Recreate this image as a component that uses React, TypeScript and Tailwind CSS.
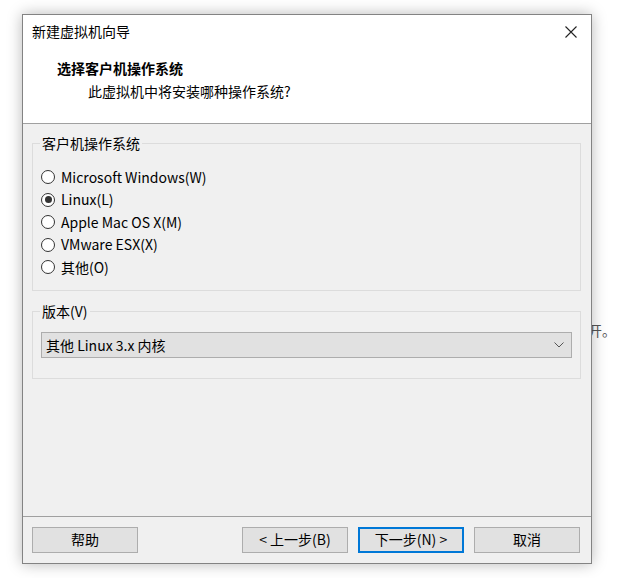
import React from "react";

const font = { fontFamily: '"Noto Sans CJK SC", "Noto Sans", sans-serif' };

const options = ["Microsoft Windows(W)", "Linux(L)", "Apple Mac OS X(M)", "VMware ESX(X)", "其他(O)"];

const Radio = ({ checked }: { checked?: boolean }) => (
  <span className="w-[14px] h-[14px] rounded-full border border-[#333] bg-white flex items-center justify-center shrink-0">
    {checked && <span className="w-[7px] h-[7px] rounded-full bg-[#333]" />}
  </span>
);

const Button = ({ label, primary }: { label: string; primary?: boolean }) => (
  <button
    className={
      "w-[106px] h-[26px] bg-[#e1e1e1] text-[14px] text-black flex items-center justify-center " +
      (primary ? "border-2 border-[#0078d7]" : "border border-[#adadad]")
    }
  >
    {label}
  </button>
);

export default function App() {
  return (
    <div className="relative w-[618px] h-[578px] bg-white overflow-hidden" style={font}>
      <div className="absolute left-[588px] top-[320px] text-[14px] text-[#555]">开。</div>

      <div className="relative ml-[22px] pt-[14px]">
        <div className="w-[570px] h-[550px] border border-[#838383] bg-white flex flex-col shadow-[0_0_14px_rgba(0,0,0,0.28)]">
          {/* title bar */}
          <div className="h-[36px] flex items-center justify-between pl-[9px] pr-[14px] pb-[3px] shrink-0">
            <span className="text-[14px] text-black">新建虚拟机向导</span>
            <svg width="12" height="12" viewBox="0 0 12 12">
              <path d="M0.5 0.5 L11.5 11.5 M11.5 0.5 L0.5 11.5" stroke="#222" strokeWidth="1.1" />
            </svg>
          </div>

          {/* header */}
          <div className="h-[73px] shrink-0 border-b border-[#a0a0a0] pl-[34px] pt-[7px]">
            <div className="text-[14px] font-bold text-black leading-[20px]">选择客户机操作系统</div>
            <div className="text-[14px] text-black leading-[20px] pl-[31px] pt-[3px]">此虚拟机中将安装哪种操作系统?</div>
          </div>

          {/* body */}
          <div className="flex-1 bg-[#f0f0f0] pl-[9px] pr-[10px] pt-[19px] border-b border-[#a0a0a0]">
            <div className="relative h-[148px] border border-[#dcdcdc] pl-[8px] pt-[22px]">
              <span className="absolute left-[7px] -top-[11px] bg-[#f0f0f0] px-[2px] text-[14px] text-black leading-[20px]">
                客户机操作系统
              </span>
              {options.map((o, i) => (
                <div key={o} className="h-[22.5px] flex items-center gap-[6px] text-[14px] text-black">
                  <Radio checked={i === 1} />
                  <span>{o}</span>
                </div>
              ))}
            </div>

            <div className="relative mt-[20px] h-[68px] border border-[#dcdcdc] pl-[8px] pr-[8px] pt-[20px]">
              <span className="absolute left-[7px] -top-[11px] bg-[#f0f0f0] px-[2px] text-[14px] text-black leading-[20px]">
                版本(V)
              </span>
              <div className="h-[26px] border border-[#adadad] bg-[#e1e1e1] flex items-center justify-between pl-[4px] pr-[7px] text-[14px] text-black">
                <span>其他 Linux 3.x 内核</span>
                <svg width="10" height="6" viewBox="0 0 10 6">
                  <path d="M0.5 0.5 L5 5 L9.5 0.5" fill="none" stroke="#555" strokeWidth="1" />
                </svg>
              </div>
            </div>
          </div>

          {/* footer */}
          <div className="h-[46px] shrink-0 bg-[#f0f0f0] flex items-center pl-[9px] pr-[11px] pb-[1px]">
            <Button label="帮助" />
            <div className="flex-1" />
            <div className="flex gap-[10px]">
              <Button label="< 上一步(B)" />
              <Button label="下一步(N) >" primary />
              <Button label="取消" />
            </div>
          </div>
        </div>
      </div>
    </div>
  );
}
